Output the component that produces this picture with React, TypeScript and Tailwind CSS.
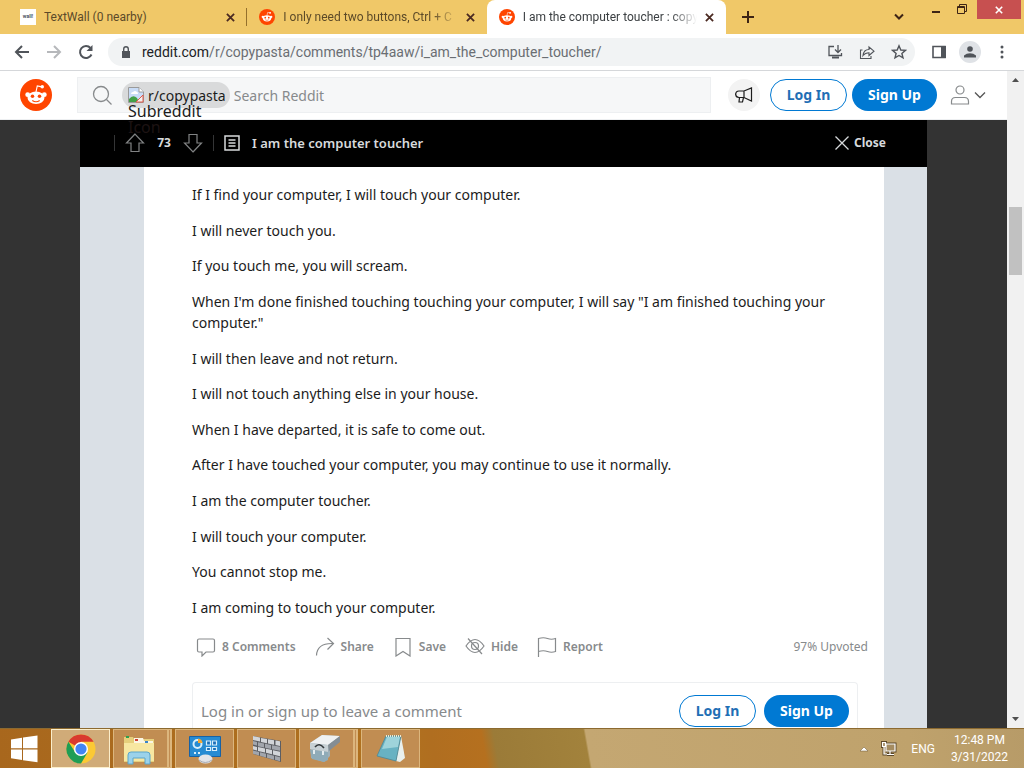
import type { ReactNode } from "react"

import clsx from "clsx"

const paragraphs = [
    "If I find your computer, I will touch your computer.",
    "I will never touch you.",
    "If you touch me, you will scream.",
    "When I'm done finished touching touching your computer, I will say \"I am finished touching your computer.\"",
    "I will then leave and not return.",
    "I will not touch anything else in your house.",
    "When I have departed, it is safe to come out.",
    "After I have touched your computer, you may continue to use it normally.",
    "I am the computer toucher.",
    "I will touch your computer.",
    "You cannot stop me.",
    "I am coming to touch your computer.",
]

function Svg({
    size = 16,
    box = 20,
    stroke = 1,
    className,
    children,
}: {
    size?: number
    box?: number
    stroke?: number
    className?: string
    children: ReactNode
}) {
    return (
        <svg
            width={size}
            height={size}
            viewBox={`0 0 ${box} ${box}`}
            fill="none"
            stroke="currentColor"
            strokeWidth={stroke}
            className={clsx("shrink-0", className)}
            aria-hidden="true"
        >
            {children}
        </svg>
    )
}

function Snoo({ size }: { size: number }) {
    return (
        <Svg size={size} box={20} stroke={0}>
            <circle cx="10" cy="10" r="10" fill="#ff4500" />
            <g fill="#fff">
                <ellipse cx="10" cy="11.7" rx="5.3" ry="3.9" />
                <circle cx="4.8" cy="9.8" r="1.5" />
                <circle cx="15.2" cy="9.8" r="1.5" />
                <circle cx="13.9" cy="4.8" r="1.1" />
            </g>
            <path
                d="M10 8l.8-3.7 3 .6"
                stroke="#fff"
                strokeWidth="0.7"
            />
            <circle cx="7.8" cy="10.8" r="1.1" fill="#ff4500" />
            <circle cx="12.2" cy="10.8" r="1.1" fill="#ff4500" />
            <path
                d="M7.7 13.4q2.3 1.7 4.6 0"
                stroke="#ff4500"
                strokeWidth="0.7"
            />
        </Svg>
    )
}

function Cross({ size = 9, stroke = 2 }: { size?: number; stroke?: number }) {
    return (
        <Svg size={size} box={10} stroke={stroke}>
            <path d="M1 1l8 8M9 1l-8 8" />
        </Svg>
    )
}

function Tab({
    title,
    icon,
    active = false,
    divider = false,
    fade = false,
}: {
    title: string
    icon: ReactNode
    active?: boolean
    divider?: boolean
    fade?: boolean
}) {
    return (
        <div
            className={clsx(
                "flex h-[34px] min-w-0 flex-1 items-center gap-2 pr-3 pl-3",
                active
                    ? "rounded-t-lg bg-white text-[#3c4043]"
                    : "text-[#5c4a28]",
                divider && "relative"
            )}
        >
            {icon}
            <span
                className={clsx(
                    "min-w-0 flex-1 overflow-hidden text-[12px] leading-4 whitespace-nowrap",
                    fade &&
                        "[mask-image:linear-gradient(to_right,black_85%,transparent)]"
                )}
            >
                {title}
            </span>
            <button aria-label="Close tab" className="text-[#4b2a22]">
                <Cross />
            </button>
            {divider && (
                <span className="absolute top-2 right-0 h-[18px] w-px bg-[#94702c]" />
            )}
        </div>
    )
}

function BrowserTabs() {
    return (
        <div className="flex h-[34px] items-start bg-[#f0c868] font-[Roboto,sans-serif]">
            <div className="flex w-[726px] min-w-0 pl-2">
                <Tab
                    title="TextWall (0 nearby)"
                    divider
                    icon={
                        <span className="flex size-4 shrink-0 items-center justify-center bg-white text-[5px] font-bold text-gray-600">
                            wall!
                        </span>
                    }
                />
                <Tab
                    title="I only need two buttons, Ctrl + C"
                    fade
                    icon={<Snoo size={16} />}
                />
                <Tab
                    title="I am the computer toucher : copy"
                    active
                    fade
                    icon={<Snoo size={16} />}
                />
            </div>
            <button aria-label="New tab" className="ml-4 mt-[11px] text-[#3d2415]">
                <Svg size={12} box={12} stroke={2}>
                    <path d="M6 0v12M0 6h12" />
                </Svg>
            </button>
            <div className="ml-auto flex items-start text-[#3d2415]">
                <button aria-label="Search tabs" className="mt-3 mr-7">
                    <Svg size={10} box={10} stroke={2}>
                        <path d="M1 2.5l4 4 4-4" />
                    </Svg>
                </button>
                <button aria-label="Minimize" className="mt-[7px] mr-[17px]">
                    <Svg size={8} box={8} stroke={2}>
                        <path d="M0 5h8" />
                    </Svg>
                </button>
                <button aria-label="Restore" className="mt-1 mr-2.5">
                    <Svg size={10} box={10} stroke={1}>
                        <path d="M.5 2.5h7v7h-7zM.5 3.5h7M2.5 2V.5h7v7H8" />
                    </Svg>
                </button>
                <button
                    aria-label="Close window"
                    className="mr-[3px] flex h-[19px] w-[44px] items-center justify-center bg-[#c75050] text-white"
                >
                    <Cross size={8} />
                </button>
            </div>
        </div>
    )
}

function Toolbar() {
    return (
        <div className="flex h-[37px] items-center border-b border-[#d5d7da] bg-white pl-[14px] font-[Roboto,sans-serif] text-[#50545a]">
            <button aria-label="Back">
                <Svg box={16} stroke={2}>
                    <path d="M15 8H2M8 2L2 8l6 6" />
                </Svg>
            </button>
            <button aria-label="Forward" className="ml-4 text-[#b6b8bb]">
                <Svg box={16} stroke={2}>
                    <path d="M1 8h13M8 2l6 6-6 6" />
                </Svg>
            </button>
            <button aria-label="Reload" className="ml-4">
                <Svg box={16} stroke={2}>
                    <path d="M13.5 10.5A6 6 0 1 1 12.5 4" />
                    <path d="M14.5 1v6h-6z" fill="currentColor" stroke="none" />
                </Svg>
            </button>
            <div className="ml-[14px] flex h-7 min-w-0 flex-1 items-center rounded-full bg-[#f1f3f4] pr-2 pl-3">
                <Svg size={12} box={12} stroke={0}>
                    <path
                        d="M2 5h8v7H2z"
                        fill="currentColor"
                    />
                    <path
                        d="M3.7 5.5V3a2.3 2.3 0 0 1 4.6 0v2.5"
                        stroke="currentColor"
                        strokeWidth="1.4"
                    />
                </Svg>
                <div className="ml-2.5 min-w-0 flex-1 overflow-hidden text-[14px] leading-5 whitespace-nowrap text-[#6a6e73]">
                    <span className="text-[#202124]">reddit.com</span>
                    /r/copypasta/comments/tp4aaw/i_am_the_computer_toucher/
                </div>
                <div className="flex items-center gap-4">
                    <button aria-label="Install">
                        <Svg box={16} stroke={1.3}>
                            <path d="M7 2.500H2v9h12.500V9M11 1v7M8 5.500l3 3 3-3" />
                            <path d="M5 13.500h7" strokeWidth="2" />
                        </Svg>
                    </button>
                    <button aria-label="Share page">
                        <Svg box={16} stroke={1.1}>
                            <path d="M3.5 6H1.5v8.5H12V12M4 11.5C4.500 7.500 7 5.500 10 5.500V3l5 4.200-5 4.300V8.700C7.500 8.700 5.500 9.500 4 11.500z" />
                        </Svg>
                    </button>
                    <button aria-label="Bookmark">
                        <Svg box={16} stroke={1.4}>
                            <path d="M8 1.800l1.800 4.200 4.600.4-3.500 3 1.100 4.500L8 11.500l-4 2.400 1.100-4.500-3.500-3 4.600-.4z" />
                        </Svg>
                    </button>
                </div>
            </div>
            <button aria-label="Side panel" className="ml-4">
                <Svg box={16} stroke={1.6}>
                    <path d="M2 2.500h12v11H2z" />
                    <path d="M10 2h5v12h-5z" fill="currentColor" stroke="none" />
                </Svg>
            </button>
            <button
                aria-label="Profile"
                className="ml-3 flex size-[22px] items-center justify-center rounded-full bg-[#dfe2e6]"
            >
                <Svg size={12} box={12} stroke={0}>
                    <g fill="currentColor">
                        <circle cx="6" cy="3" r="2.800" />
                        <path d="M0 11.500V9.500Q2.500 7.200 6 7.200T12 9.500v2z" />
                    </g>
                </Svg>
            </button>
            <button aria-label="Menu" className="mr-[14px] ml-[13px]">
                <Svg box={16} stroke={0}>
                    <g fill="currentColor">
                        <circle cx="8" cy="3" r="1.500" />
                        <circle cx="8" cy="8" r="1.500" />
                        <circle cx="8" cy="13" r="1.500" />
                    </g>
                </Svg>
            </button>
        </div>
    )
}

function AuthButtons({ className }: { className: string }) {
    return (
        <div
            className={clsx(
                "flex text-[14px] leading-none font-bold",
                className
            )}
        >
            <button className="h-8 w-[77px] rounded-full border border-[#0079d3] text-[#1f6fb5]">
                Log In
            </button>
            <button className="h-8 w-[85px] rounded-full bg-[#0079d3] text-white">
                Sign Up
            </button>
        </div>
    )
}

function RedditHeader() {
    return (
        <header className="flex h-[49px] items-center border-b border-[#edeff1] bg-white pl-5">
            <a href="#" aria-label="Reddit home">
                <Snoo size={32} />
            </a>
            <div className="ml-[25px] flex h-9 min-w-0 flex-1 items-center border border-[#edeff1] bg-[#f6f7f8] pl-[14px]">
                <Svg size={20} className="text-[#878a8c]" stroke={1.3}>
                    <circle cx="9" cy="9" r="7.500" />
                    <path d="M14.500 14.500l5 5" />
                </Svg>
                <div className="relative ml-2.5 flex h-[26px] items-center gap-1 rounded-full bg-[#d9dadb] pr-1 pl-1.5 text-[14px] text-[#1c1c1c]">
                    <Svg box={16}>
                        <path
                            d="M.500.500h10.500l4.500 4.500v10.500H.500z"
                            fill="#c9dcf7"
                            stroke="#9a9a9a"
                        />
                        <path d="M11 .500v4.500h4.500" fill="#fff" stroke="#9a9a9a" />
                        <path
                            d="M3 7q0-2 2-2 2-2 4 0 1 0 1 2z"
                            fill="#fff"
                            stroke="none"
                        />
                        <path
                            d="M1 15v-3q4-5 8-1l2 4z"
                            fill="#43a047"
                            stroke="none"
                        />
                        <path
                            d="M8 15l7-7v7z"
                            fill="#f0f0f0"
                            stroke="#e05a4b"
                        />
                    </Svg>
                    r/copypasta
                    {/* alt text spilling out of the broken subreddit icon */}
                    <span className="absolute top-[21px] left-1.5 z-10 flex w-20 flex-col text-[16px] leading-4 text-[#1c1c1c]">
                        <span>Subreddit</span>
                        <span className="text-[#1d1313]">Icon</span>
                    </span>
                </div>
                <input
                    type="text"
                    aria-label="Search Reddit"
                    placeholder="Search Reddit"
                    className="ml-1 min-w-0 flex-1 bg-transparent text-[14px] outline-none placeholder:text-[#878a8c]"
                />
            </div>
            <button
                aria-label="Advertise"
                className="ml-[17px] flex size-8 items-center justify-center rounded-full bg-[#f3f3f3] text-[#1c1c1c]"
            >
                <Svg size={20} stroke={1.2}>
                    <path d="M17.500 3v13L10 12.500H5a3 3 0 0 1 0-6.500h5zM10 6v6.500M5.500 12.500L5 17h3.500l1-4.500M2 9.200H1" />
                </Svg>
            </button>
            <AuthButtons className="ml-2.5 gap-[5px]" />
            <button
                aria-label="User menu"
                className="mr-[21px] ml-[13px] flex items-center gap-1 text-[#878a8c]"
            >
                <Svg size={20} stroke={1.2}>
                    <circle cx="10" cy="5" r="4" />
                    <path d="M1.500 19v-2.500q0-4 4-4h9q4 0 4 4V19z" />
                </Svg>
                <Svg size={12} box={12} stroke={1.3} className="text-[#555]">
                    <path d="M1 3.500l5 5 5-5" />
                </Svg>
            </button>
        </header>
    )
}

function PostBar() {
    return (
        <div className="flex h-[47px] shrink-0 items-center bg-black pr-[41px] pb-0.5 pl-[34px] text-[#d7dadc]">
            <span className="h-4 w-px bg-[#343536]" />
            <button aria-label="Upvote" className="ml-[10px] text-[#818384]">
                <Svg size={20} stroke={1.2}>
                    <path d="M10 1L1.500 10H6v8.500h8V10h4.500z" />
                </Svg>
            </button>
            <span className="w-[38px] text-center text-[12px] font-bold">73</span>
            <button aria-label="Downvote" className="text-[#818384]">
                <Svg size={20} stroke={1.2}>
                    <path d="M10 19l8.500-9H14V1.500H6V10H1.500z" />
                </Svg>
            </button>
            <span className="ml-2.5 h-4 w-px bg-[#343536]" />
            <Svg size={16} box={16} stroke={1.5} className="ml-[10px]">
                <path d="M1 1h14v14H1zM4.500 5h7M4.500 8h7M4.500 11h7" />
            </Svg>
            <h1 className="ml-3 flex-1 text-[13px] leading-[18px] font-semibold">
                I am the computer toucher
            </h1>
            <button className="flex items-center gap-1 text-[12px] font-bold">
                <Svg size={16} box={16} stroke={1.3}>
                    <path d="M1.500 1.500l13 13M14.500 1.500l-13 13" />
                </Svg>
                Close
            </button>
        </div>
    )
}

function Action({
    label,
    className,
    children,
}: {
    label: string
    className: string
    children: ReactNode
}) {
    return (
        <button className={clsx("flex items-center gap-1.5", className)}>
            <Svg size={20} stroke={1.2}>
                {children}
            </Svg>
            {label}
        </button>
    )
}

function Post() {
    return (
        <article className="mr-[43px] ml-16 flex min-h-0 flex-1 flex-col bg-white pl-12">
            <div className="mt-[17px] mr-[42px] flex flex-1 flex-col justify-between text-[14px] leading-[21px] text-[#1c1c1c]">
                {paragraphs.map((text) => (
                    <p key={text}>{text}</p>
                ))}
            </div>

            <div className="mt-[19px] mr-4 flex h-5 items-center pl-1 text-[12px] font-semibold text-[#878a8c]">
                <Action label="8 Comments" className="mr-[19px]">
                    <path d="M3 2h14q1.500 0 1.500 1.500v10q0 1.500-1.500 1.500H10l-4 4v-4H3q-1.500 0-1.500-1.500v-10Q1.500 2 3 2z" />
                </Action>
                <Action label="Share" className="mr-[19px]">
                    <path d="M1.500 18.500Q2 6 18 6.500M12.500 1L18.500 6.500l-6 6" />
                </Action>
                <Action label="Save" className="mr-[19px]">
                    <path d="M3 1.500h14v17.500l-7-4.500L3 19z" />
                </Action>
                <Action label="Hide" className="mr-[19px]">
                    <path d="M1 9q9-13 18 0-9 13-18 0z" />
                    <circle cx="10" cy="9" r="3.500" />
                    <path d="M3 1.500l14 15.500" />
                </Action>
                <Action label="Report" className="mr-auto">
                    <path d="M1.500 20V1.500q5-1.500 9 0t8 0V14.500q-4 1.500-8 0t-9 0" />
                </Action>
                <span className="font-normal">97% Upvoted</span>
            </div>

            <div className="mt-[25px] mr-[26px] flex h-[46px] items-start rounded-t border border-b-0 border-[#edeff1] pt-3 pr-2 pl-2">
                <p className="min-w-0 flex-1 text-[15px] leading-8 text-[#878a8c]">
                    Log in or sign up to leave a comment
                </p>
                <AuthButtons className="gap-2" />
            </div>
        </article>
    )
}

function Scrollbar() {
    return (
        <div className="flex w-[17px] shrink-0 flex-col items-center justify-between bg-[#f1f1f1] text-[#505050]">
            <Svg size={17} box={17} stroke={0}>
                <path d="M5 11l3.500-4 3.500 4z" fill="currentColor" />
            </Svg>
            <div className="flex w-full flex-1 flex-col px-0.5">
                <div className="flex-[119]" />
                <div className="h-[68px] bg-[#c1c1c1]" />
                <div className="flex-[436]" />
            </div>
            <Svg size={17} box={17} stroke={0}>
                <path d="M5 6l3.500 4L12 6z" fill="currentColor" />
            </Svg>
        </div>
    )
}

function TaskButton({
    label,
    active = false,
    stacked = false,
    children,
}: {
    label: string
    active?: boolean
    stacked?: boolean
    children: ReactNode
}) {
    return (
        <button
            aria-label={label}
            className={clsx(
                "flex h-[39px] w-[59px] items-center justify-center border",
                active
                    ? "border-[#fbeecb] bg-[#d0ab78]"
                    : "border-[#dcb67d] bg-[#c18d52]",
                stacked && "border-r-[5px] border-double pr-1"
            )}
        >
            {children}
        </button>
    )
}

function Taskbar() {
    return (
        <footer className="flex h-10 items-center border-t border-[#8c6a30] bg-[linear-gradient(80deg,#a8671d_0px,#b0721f_400px,#b06e20_430px,#b5701f_480px,#9b7b38_492px,#a2823c_581px,#c4a772_583px,#bfa26c_900px,#b79b68_100%)] font-[Roboto,sans-serif] text-white">
            <button
                aria-label="Start"
                className="flex w-[51px] justify-center pr-1"
            >
                <Svg size={28} box={28} stroke={0}>
                    <path
                        d="M1 4.500l11-1.700v10.500H1zM13 2.600L27.500.500v12.800H13zM1 14.500h11V25L1 23.300zM13 14.500h14.500v12.800L13 25.200z"
                        fill="#fff"
                    />
                </Svg>
            </button>
            <div className="flex gap-[3px]">
                <TaskButton label="Google Chrome" active>
                    <Svg size={30} box={30} stroke={0}>
                        <circle cx="15" cy="15" r="14.500" fill="#fbc934" />
                        <path
                            d="M15 15L2.400 7.700A14.500 14.500 0 0 1 27.600 7.700H15z"
                            fill="#d93a2f"
                        />
                        <path
                            d="M2.400 7.700A14.500 14.500 0 0 0 15 29.500L21.500 18.500 9 18z"
                            fill="#1f9d55"
                        />
                        <circle cx="15" cy="15" r="7" fill="#fff" />
                        <circle cx="15" cy="15" r="5.600" fill="#4285f4" />
                    </Svg>
                </TaskButton>
                <TaskButton label="File Explorer" stacked>
                    <Svg size={32} box={32} stroke={0}>
                        <path d="M1 4h9l1 2h20v23H1z" fill="#e6cf7b" />
                        <path d="M11 5h9l1 3h9v5H11z" fill="#faf6e4" />
                        <path d="M3 3h3v2H3z" fill="#2e9e4f" />
                        <path d="M12 6h3v2h-3z" fill="#cf4036" />
                        <path d="M22 8h3v2h-3z" fill="#3a84c9" />
                        <path d="M1 10h30v18H1z" fill="#f7e7a1" />
                        <path
                            d="M5 31V22q0-3 3-3h16q3 0 3 3v9h-5v-6H10v6z"
                            fill="#9bd2ea"
                            stroke="#5aa5ca"
                            strokeWidth="1"
                        />
                    </Svg>
                </TaskButton>
                <TaskButton label="Control Panel">
                    <Svg size={32} box={32} stroke={0}>
                        <path
                            d="M.500 3.500h31v20H.500z"
                            fill="#268bd2"
                            stroke="#1762a5"
                            strokeWidth="1"
                        />
                        <circle
                            cx="8.500"
                            cy="11"
                            r="4"
                            stroke="#d8effb"
                            strokeWidth="2"
                        />
                        <path d="M9 10V5.500a5 5 0 0 1 4.500 4.500z" fill="#f5a833" />
                        <path
                            d="M17.500 8h4v4h-4zM23.500 8h4v4h-4zM17.500 14.500h4v3h-4zM23.500 14.500h4v3h-4z"
                            fill="#1c6fb8"
                            stroke="#d8effb"
                            strokeWidth="1.200"
                        />
                        <path d="M5 19h2v2H5zM9 19h2v2H9z" fill="#d8effb" />
                        <ellipse cx="16.500" cy="26" rx="7" ry="4.500" fill="#e2e4e8" />
                        <path
                            d="M10 27q6 5 13 0"
                            stroke="#a8abb2"
                            strokeWidth="1"
                        />
                    </Svg>
                </TaskButton>
                <TaskButton label="Brick wall">
                    <Svg size={30} box={30} stroke={0}>
                        <path d="M1 2l28 5v21L1 20z" fill="#5c5e63" />
                        <g fill="#d2d5d9">
                            <path d="M1 2l7 1.500v4L1 6zM9 4l6 1v4.200L9 8zM16 5.200l6 1.100v4.500L16 9.500zM23.500 6.500l4.500.8v4.700l-4.500-1z" />
                            <path d="M1 12l4 1v3.500l-4-1zM6 13l7 1.500v4L6 17zM14 14.700l6 1.300v4.200l-6-1.500zM21 16.200l7 1.500v4.500l-7-1.800z" />
                        </g>
                        <g fill="#a2a6ad">
                            <path d="M1 7l4 1v3.500l-4-1zM6 8.200l6 1.300v4L6 12.200zM13 9.700l6 1.300v4l-6-1.300zM20 11.200l8 1.600v4l-8-1.600z" />
                            <path d="M1 16.500l6 1.500v3.500l-6-1.700zM8 18.300l6 1.500v3.600l-6-1.700zM15 20l7 1.700v4L15 23.700zM23 22l5 1.200v4L23 25.800z" />
                        </g>
                    </Svg>
                </TaskButton>
                <TaskButton label="Utilities" stacked>
                    <Svg size={32} box={32} stroke={0}>
                        <path d="M1 10L13 2l18 1-10 9v11L15 29 2 25z" fill="#9fb0b8" />
                        <path d="M1 10L13 2l18 1-12 9z" fill="#eff1f2" />
                        <path d="M19 12L31 3v6L20 18z" fill="#848d94" />
                        <path d="M1 10l18 2v7L1 16z" fill="#c7d0d4" />
                        <path
                            d="M6 14q4-5 9 1"
                            stroke="#34393c"
                            strokeWidth="1.600"
                        />
                        <path d="M1 17l18 2v8l-4 2-12-3z" fill="#8fabb8" />
                        <path d="M4 17h2v4H4zM13 18h2v4h-2z" fill="#e4ecef" />
                    </Svg>
                </TaskButton>
                <TaskButton label="Notepad">
                    <Svg size={30} box={30} stroke={0}>
                        <path d="M25 2l4 22-5 4-4-1z" fill="#e9f0ee" />
                        <path d="M10 2h15l-5 25L1 22z" fill="#68b2c2" />
                        <path d="M11 3h13l-2 10L6 15z" fill="#9ed3da" />
                        <path
                            d="M10 2h15l-5 25L1 22z"
                            stroke="#4b8795"
                            strokeWidth="0.800"
                        />
                        <path
                            d="M10 2h15"
                            stroke="#ece9d5"
                            strokeWidth="2"
                            strokeDasharray="1 1"
                        />
                    </Svg>
                </TaskButton>
            </div>

            <div className="ml-auto flex items-center pr-4 text-[12px]">
                <button aria-label="Show hidden icons">
                    <Svg size={8} box={8} stroke={0}>
                        <path
                            d="M0 6l4-4 4 4z"
                            fill="#fff"
                            stroke="#6b5433"
                            strokeWidth="0.500"
                        />
                    </Svg>
                </button>
                <Svg size={16} box={16} stroke={3} className="ml-[13px] text-[#5c4829]">
                    <path d="M5 3h9v7H5zM9 10v3M6 13.500h7M1.500 1.500h3v4h-3zM3 5v8h3" />
                    <path
                        d="M5 3h9v7H5zM9 10v3M6 13.500h7M1.500 1.500h3v4h-3zM3 5v8h3"
                        fill="#a58c61"
                        stroke="#fff"
                        strokeWidth="1.200"
                    />
                </Svg>
                <span className="ml-3.5">ENG</span>
                <time className="ml-4 text-center leading-[17px]">
                    12:48 PM
                    <br />
                    3/31/2022
                </time>
            </div>
        </footer>
    )
}

export default function App() {
    return (
        <div className="flex h-screen flex-col overflow-hidden font-['Noto_Sans',sans-serif]">
            <BrowserTabs />
            <Toolbar />

            <div className="flex min-h-0 flex-1">
                <div className="flex min-w-0 flex-1 flex-col">
                    <RedditHeader />

                    <main className="flex min-h-0 flex-1 bg-[#333333] px-20">
                        <div className="flex min-w-0 flex-1 flex-col bg-[#dae0e6]">
                            <PostBar />
                            <Post />
                        </div>
                    </main>
                </div>
                <Scrollbar />
            </div>

            <Taskbar />
        </div>
    )
}
